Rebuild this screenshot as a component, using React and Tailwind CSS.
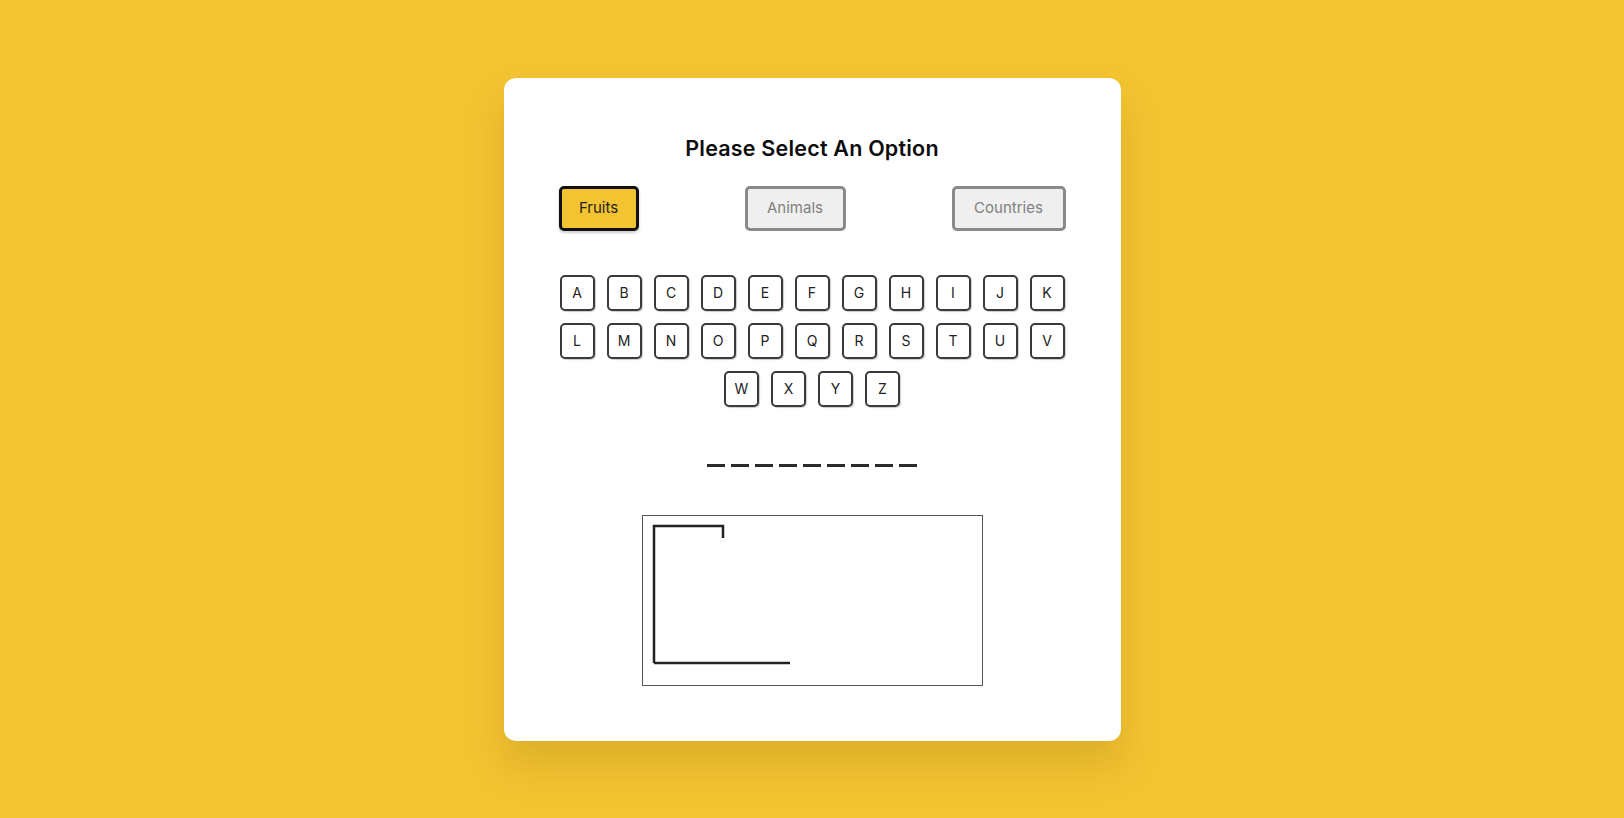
import React, { useState } from "react";

const letters = "ABCDEFGHIJKLMNOPQRSTUVWXYZ".split("");
const categories = [
  { name: "Fruits", w: "w-[80px]" },
  { name: "Animals", w: "w-[101px]" },
  { name: "Countries", w: "w-[114px]" },
];

export default function App() {
  const [category, setCategory] = useState("Fruits");
  const [guessed, setGuessed] = useState([]);
  const word = "_________".split("");

  return (
    <div className="min-h-screen w-full bg-[#f3c431] flex items-center justify-center font-['Inter',sans-serif]">
      <div className="w-[617px] bg-white rounded-xl px-[55px] pt-[55px] pb-[55px] shadow-[0_24px_40px_rgba(120,80,0,0.18)] flex flex-col items-center">
        <h1 className="text-[21.5px] leading-[30px] font-semibold text-[#0d0d0d] tracking-[0.2px]">
          Please Select An Option
        </h1>

        <div className="w-full flex justify-between mt-[23px]">
          {categories.map((c) => {
            const active = c.name === category;
            return (
              <button
                key={c.name}
                onClick={() => setCategory(c.name)}
                className={
                  active
                    ? `${c.w} h-[45px] rounded-[5px] border-[3px] border-[#111] bg-[#f3c431] text-[15px] text-[#222] shadow-[0_2px_3px_rgba(0,0,0,0.2)]`
                    : `${c.w} h-[45px] rounded-[5px] border-[3px] border-[#8a8a8a] bg-[#efefef] text-[15px] text-[#808080]`
                }
              >
                {c.name}
              </button>
            );
          })}
        </div>

        <div className="w-full flex flex-wrap justify-center gap-x-[12px] gap-y-[12px] mt-[44px]">
          {letters.map((l) => (
            <button
              key={l}
              onClick={() => setGuessed([...guessed, l])}
              className="w-[35px] h-[36px] rounded-[5px] border-2 border-[#3a3a3a] bg-white text-[14px] text-[#222] flex items-center justify-center shadow-[1px_1px_1px_rgba(0,0,0,0.2)]"
            >
              {l}
            </button>
          ))}
        </div>

        <div className="flex gap-[6px] mt-[57px]">
          {word.map((_, i) => (
            <span key={i} className="block w-[18px] h-[3px] bg-[#2a2a2a]" />
          ))}
        </div>

        <div className="mt-[48px] w-[341px] h-[171px] border border-[#555] bg-white">
          <svg width="339" height="169" viewBox="0 0 339 169">
            <path
              d="M11 147 L11 10 L80 10 L80 22"
              fill="none"
              stroke="#222"
              strokeWidth="2.5"
            />
            <path d="M11 147 L147 147" fill="none" stroke="#222" strokeWidth="2.5" />
          </svg>
        </div>
      </div>
    </div>
  );
}
